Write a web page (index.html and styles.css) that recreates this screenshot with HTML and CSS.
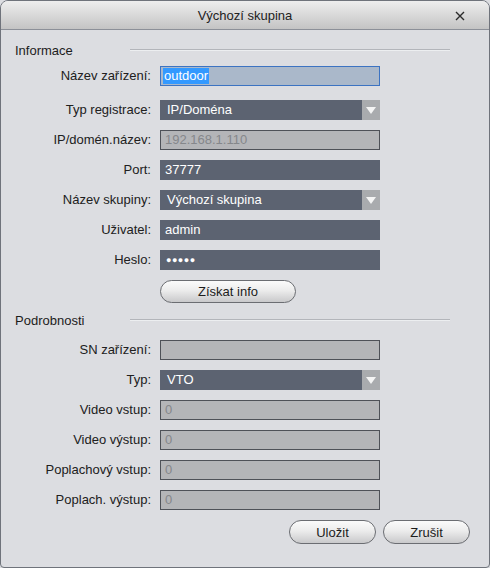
FILE: index.html
```html
<!DOCTYPE html>
<html lang="cs">
<head>
    <meta charset="UTF-8">
    <title>Výchozí skupina</title>
    <link rel="stylesheet" href="styles.css">
</head>
<body>
    <div class="window">
        <div class="titlebar">
            <span class="title">Výchozí skupina</span>
            <svg class="close" width="10" height="10" viewBox="0 0 10 10">
                <path d="M1 1L9 9M9 1L1 9" stroke="#2b2b2b" stroke-width="1.4"/>
            </svg>
        </div>
        <div class="content">
            <div class="legend"><span class="legend-text">Informace</span><span class="legend-line"></span></div>
            <div class="form">
                <label>Název zařízení:</label>
                <div class="field focus"><span class="sel">outdoor</span></div>

                <label class="spaced">Typ registrace:</label>
                <div class="field dark combo spaced"><span>IP/Doména</span><i class="arrow"></i></div>

                <label>IP/domén.název:</label>
                <div class="field off">192.168.1.110</div>

                <label>Port:</label>
                <div class="field dark">37777</div>

                <label>Název skupiny:</label>
                <div class="field dark combo"><span>Výchozí skupina</span><i class="arrow"></i></div>

                <label>Uživatel:</label>
                <div class="field dark">admin</div>

                <label>Heslo:</label>
                <div class="field dark dots">●●●●●</div>

                <span></span>
                <button class="btn wide">Získat info</button>
            </div>

            <div class="legend second"><span class="legend-text">Podrobnosti</span><span class="legend-line"></span></div>
            <div class="form">
                <label>SN zařízení:</label>
                <div class="field off"></div>

                <label>Typ:</label>
                <div class="field dark combo"><span>VTO</span><i class="arrow"></i></div>

                <label>Video vstup:</label>
                <div class="field off">0</div>

                <label>Video výstup:</label>
                <div class="field off">0</div>

                <label>Poplachový vstup:</label>
                <div class="field off">0</div>

                <label>Poplach. výstup:</label>
                <div class="field off">0</div>
            </div>

            <div class="actions">
                <button class="btn">Uložit</button>
                <button class="btn">Zrušit</button>
            </div>
        </div>
    </div>
</body>
</html>
```

FILE: styles.css
```css
body {
    margin: 0;
    font-family: "Liberation Sans", Arial, sans-serif;
    font-size: 13px;
    color: #1c1c1c;
    background: #dcdde1;
}
.window {
    box-sizing: border-box;
    width: 490px;
    height: 568px;
    border: 1px solid #6f737b;
    border-radius: 8px 8px 4px 4px;
    background: #dcdde1;
    overflow: hidden;
}
.titlebar {
    height: 28px;
    border-bottom: 1px solid #8c9098;
    background: linear-gradient(#eeeeee, #d9d9d9 50%, #c4c4c4);
    display: flex;
    align-items: center;
    justify-content: center;
    position: relative;
}
.title {
    font-size: 13px;
    color: #222;
}
.close {
    position: absolute;
    right: 24px;
    top: 10px;
}
.content {
    padding: 10px 19px 0 0;
    display: flex;
    flex-direction: column;
}
.legend {
    display: flex;
    align-items: center;
    height: 20px;
}
.legend-text {
    width: 115px;
    padding-left: 14px;
}
.legend-line {
    width: 320px;
    height: 1px;
    background: #b3b5ba;
    border-bottom: 1px solid #eceef0;
}
.form {
    display: grid;
    grid-template-columns: 150px 220px;
    column-gap: 9px;
    row-gap: 10px;
    margin-top: 6px;
    align-items: center;
}
.form + .legend {
    margin-top: 7px;
}
.legend.second + .form {
    margin-top: 10px;
}
label {
    text-align: right;
    line-height: 20px;
    color: #202020;
}
.spaced {
    margin-top: 4px;
}
.field {
    box-sizing: border-box;
    height: 20px;
    line-height: 18px;
    padding: 0 4px;
    border: 1px solid #5c6371;
    display: flex;
    align-items: center;
    white-space: nowrap;
}
.dark {
    background: #5c6371;
    color: #fff;
}
.off {
    background: #b4b5b8;
    border-color: #4e5158;
    color: #85878b;
}
.focus {
    background: #aab8ca;
    border-color: #3c73c2;
    padding-left: 2px;
}
.sel {
    background: #3399ff;
    color: #fff;
    padding: 0 1px;
    line-height: 16px;
}
.combo {
    padding-right: 0;
    justify-content: space-between;
}
.combo span {
    padding-left: 2px;
}
.arrow {
    width: 18px;
    height: 20px;
    margin-right: -1px;
    background: #a9abae;
    display: flex;
    align-items: center;
    justify-content: center;
}
.arrow::after {
    content: "";
    border-left: 5px solid transparent;
    border-right: 5px solid transparent;
    border-top: 7px solid #f4f4f4;
}
.dots {
    font-size: 9px;
    letter-spacing: 0.5px;
    padding-left: 5px;
}
.btn {
    height: 24px;
    width: 87px;
    border: 1px solid #6b6d72;
    border-radius: 12px;
    background: linear-gradient(#fbfbfb, #ececec 45%, #c9c9cb);
    font-family: inherit;
    font-size: 13px;
    color: #1c1c1c;
    padding: 0;
}
.btn.wide {
    width: 136px;
    height: 23px;
}
.actions {
    display: flex;
    justify-content: flex-end;
    gap: 7px;
    margin-top: 10px;
}
```
